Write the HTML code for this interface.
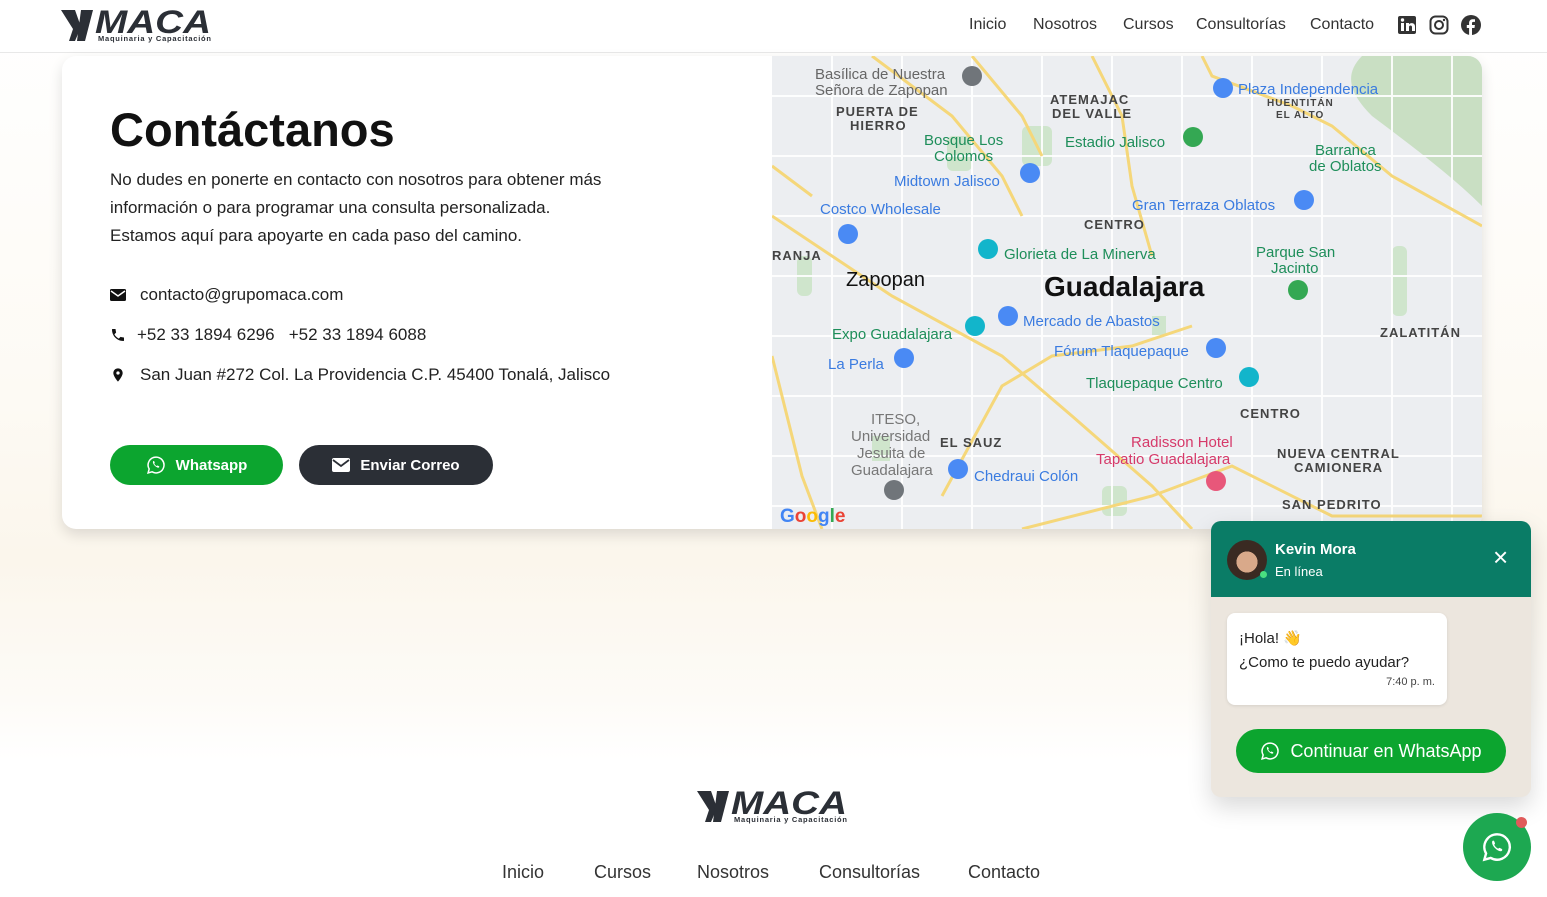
<!DOCTYPE html>
<html><head><meta charset="utf-8"><style>
*{margin:0;padding:0;box-sizing:border-box}
body{width:1547px;height:897px;overflow:hidden;font-family:"Liberation Sans",sans-serif;background:linear-gradient(#fff 0,#fdfaf4 400px,#fbf6ec 560px,#fdfbf7 700px,#fff 760px);position:relative;color:#111}
.hdr{position:absolute;top:0;left:0;width:1547px;height:53px;background:#fff;border-bottom:1px solid #e8e8e8}
.nav{position:absolute;top:16px;font-size:16px;color:#333}
.card{position:absolute;left:62px;top:56px;width:1420px;height:473px;background:#fff;border-radius:14px;box-shadow:0 6px 14px rgba(0,0,0,.12);overflow:hidden}
h1{position:absolute;left:48px;top:46px;font-size:47px;font-weight:bold;color:#111}
.p{position:absolute;left:48px;top:110px;font-size:17px;line-height:28px;color:#222;width:505px}
.ci{position:absolute;left:48px;font-size:17px;color:#222;display:flex;align-items:center;gap:14px}
.btn{position:absolute;top:389px;height:40px;border-radius:20px;color:#fff;font-weight:bold;font-size:15px;display:flex;align-items:center;justify-content:center;gap:10px}
.map{position:absolute;left:710px;top:0;width:710px;height:473px;background:#eef0f3}
.map text{font-family:"Liberation Sans",sans-serif;font-size:15px}
.chat{position:absolute;left:1211px;top:521px;width:320px;height:276px;border-radius:10px;overflow:hidden;background:#ece6de;box-shadow:0 10px 24px rgba(0,0,0,.15)}
.ch{height:76px;background:#0a7c66;position:relative;color:#fff}
.fl{position:absolute;left:1463px;top:813px;width:68px;height:68px;border-radius:50%;background:#1da851}
.fn{position:absolute;top:862px;font-size:18px;color:#333}
</style></head><body>
<div class="hdr">
<svg style="position:absolute;left:61px;top:9px" width="152" height="34" viewBox="0 0 152 34"><polygon points="0,1 14,1 20,18 14,32 8,32 12,20" fill="#2b2f36"/><polygon points="20,1 32,1 24,32 16,32" fill="#2b2f36"/><text x="34" y="24" font-family="Liberation Sans" font-weight="bold" font-style="italic" font-size="32" textLength="116" lengthAdjust="spacingAndGlyphs" fill="#2b2f36">MACA</text><text x="37" y="32" font-family="Liberation Sans" font-weight="bold" font-size="7.5" textLength="113" fill="#2b2f36">Maquinaria y Capacitación</text></svg>
<span class="nav" style="left:969px">Inicio</span><span class="nav" style="left:1033px">Nosotros</span><span class="nav" style="left:1123px">Cursos</span><span class="nav" style="left:1196px">Consultorías</span><span class="nav" style="left:1310px">Contacto</span>
<svg style="position:absolute;left:1397px;top:15px" width="20" height="20"><rect x="1" y="1" width="18" height="18" rx="2" fill="#333"/><rect x="4" y="8" width="3" height="8" fill="#fff"/><circle cx="5.5" cy="5" r="1.7" fill="#fff"/><path d="M9 8h3v1.5c1-2 6-2 6 2V16h-3v-4c0-2-3-2-3 0v4H9z" fill="#fff"/></svg>
<svg style="position:absolute;left:1429px;top:15px" width="20" height="20"><rect x="1.5" y="1.5" width="17" height="17" rx="5" fill="none" stroke="#333" stroke-width="2"/><circle cx="10" cy="10" r="4" fill="none" stroke="#333" stroke-width="2"/><circle cx="15" cy="5" r="1.2" fill="#333"/></svg>
<svg style="position:absolute;left:1461px;top:15px" width="20" height="20"><circle cx="10" cy="10" r="10" fill="#333"/><path d="M11 20v-7h2.5l.4-3H11V8.3c0-.8.3-1.4 1.4-1.4H14V4.3c-.3 0-1.2-.1-2.2-.1-2.2 0-3.7 1.3-3.7 3.8V10H5.8v3h2.3v7z" fill="#fff"/></svg>
</div>
<div class="card">
<h1>Contáctanos</h1>
<div class="p">No dudes en ponerte en contacto con nosotros para obtener más información o para programar una consulta personalizada. Estamos aquí para apoyarte en cada paso del camino.</div>
<div class="ci" style="top:229px"><svg width="16" height="14"><rect x="0" y="1" width="16" height="12" rx="1.5" fill="#111"/><path d="M1 3l7 5 7-5" stroke="#fff" stroke-width="1.5" fill="none"/></svg>contacto@grupomaca.com</div>
<div class="ci" style="top:269px;gap:11px"><svg width="16" height="16" viewBox="0 0 24 24"><path d="M6.6 10.8c1.4 2.8 3.8 5.1 6.6 6.6l2.2-2.2c.3-.3.7-.4 1-.2 1.1.4 2.3.6 3.6.6.6 0 1 .4 1 1V20c0 .6-.4 1-1 1C10.6 21 3 13.4 3 4c0-.6.4-1 1-1h3.5c.6 0 1 .4 1 1 0 1.3.2 2.5.6 3.6.1.3 0 .7-.2 1z" fill="#111"/></svg>+52 33 1894 6296 &nbsp; +52 33 1894 6088</div>
<div class="ci" style="top:309px"><svg width="16" height="16" viewBox="0 0 24 24"><path d="M12 2C8 2 5 5 5 9c0 5 7 13 7 13s7-8 7-13c0-4-3-7-7-7zm0 9.5a2.5 2.5 0 110-5 2.5 2.5 0 010 5z" fill="#111"/></svg>San Juan #272 Col. La Providencia C.P. 45400 Tonalá, Jalisco</div>
<div class="btn" style="left:48px;width:173px;background:#0ca52f"><svg width="20" height="20" viewBox="0 0 24 24"><path d="M12 2.5A9.5 9.5 0 003.8 16.8L2.5 21.5l4.8-1.3A9.5 9.5 0 1012 2.5z" fill="none" stroke="#fff" stroke-width="1.8"/><path d="M8.5 7.5c.5-.5 1.2-.4 1.4.2l.6 1.5c.1.4-.3.8-.6 1.1.6 1.3 1.7 2.4 3 3 .3-.3.7-.8 1.1-.6l1.5.7c.5.2.6.9.2 1.4-1.7 1.8-8.6-3.6-7.2-7.3z" fill="#fff"/></svg>Whatsapp</div>
<div class="btn" style="left:237px;width:194px;background:#2b2f36"><svg width="18" height="14"><rect x="0" y="0" width="18" height="14" rx="2" fill="#fff"/><path d="M1 2l8 6 8-6" stroke="#2b2f36" stroke-width="1.8" fill="none"/></svg>Enviar Correo</div>
<svg class="map" viewBox="0 0 710 473" width="710" height="473">
<rect width="710" height="473" fill="#eceef1"/>
<path d="M590 0 L710 0 L710 150 C680 120 640 90 600 60 C580 40 570 20 590 0Z" fill="#c9dfc3"/>
<g fill="#cfe5cc"><rect x="250" y="70" width="30" height="40" rx="6"/><rect x="175" y="80" width="25" height="35" rx="6"/><rect x="620" y="190" width="15" height="70" rx="6"/><rect x="25" y="200" width="15" height="40" rx="6"/><rect x="380" y="260" width="14" height="20"/><rect x="330" y="430" width="25" height="30" rx="6"/><rect x="100" y="380" width="18" height="25"/></g>
<g stroke="#fff" stroke-width="2" fill="none" opacity=".9">
<path d="M0 40h710M0 100h710M0 160h710M0 220h710M0 280h710M0 340h710M0 400h710M0 450h710"/>
<path d="M60 0v473M130 0v473M200 0v473M270 0v473M340 0v473M410 0v473M480 0v473M550 0v473M620 0v473M680 0v473"/>
</g>
<g stroke="#f5d77a" stroke-width="3" fill="none">
<path d="M0 160 L120 240 L230 300 L300 360 L380 430 L420 473"/>
<path d="M100 0 L180 60 L230 120 L250 160"/>
<path d="M200 0 L250 60 L270 100"/>
<path d="M320 0 L350 60 L360 130 L380 200"/>
<path d="M430 0 L440 20 L520 50 L560 70 L620 120 L710 170"/>
<path d="M0 300 L30 420 L50 473"/>
<path d="M170 440 L230 330 L280 300 L360 290 L420 270"/>
<path d="M250 473 L380 440 L460 410 L560 460 L710 460"/>
<path d="M0 110 L40 140"/>
</g>
<g fill="#666"><text x="43" y="23">Basílica de Nuestra</text><text x="43" y="39">Señora de Zapopan</text></g>
<g fill="#444" font-weight="bold" letter-spacing="1"><text x="64" y="60" style="font-size:13px">PUERTA DE</text><text x="78" y="74" style="font-size:13px">HIERRO</text><text x="278" y="48" style="font-size:13px">ATEMAJAC</text><text x="280" y="62" style="font-size:13px">DEL VALLE</text><text x="312" y="173" style="font-size:13px">CENTRO</text><text x="0" y="204" style="font-size:13px">RANJA</text><text x="608" y="281" style="font-size:13px">ZALATITÁN</text><text x="468" y="362" style="font-size:13px">CENTRO</text><text x="168" y="391" style="font-size:13px">EL SAUZ</text><text x="505" y="402" style="font-size:13px">NUEVA CENTRAL</text><text x="522" y="416" style="font-size:13px">CAMIONERA</text><text x="510" y="453" style="font-size:13px">SAN PEDRITO</text><text x="495" y="50" style="font-size:10px">HUENTITÁN</text><text x="504" y="62" style="font-size:10px">EL ALTO</text></g>
<g fill="#1e8e5a"><text x="152" y="89">Bosque Los</text><text x="162" y="105">Colomos</text><text x="293" y="91">Estadio Jalisco</text><text x="543" y="99">Barranca</text><text x="537" y="115">de Oblatos</text><text x="484" y="201">Parque San</text><text x="499" y="217">Jacinto</text><text x="60" y="283">Expo Guadalajara</text><text x="232" y="203">Glorieta de La Minerva</text><text x="314" y="332">Tlaquepaque Centro</text></g>
<g fill="#3a7be0"><text x="466" y="38">Plaza Independencia</text><text x="122" y="130">Midtown Jalisco</text><text x="48" y="158">Costco Wholesale</text><text x="360" y="154">Gran Terraza Oblatos</text><text x="251" y="270">Mercado de Abastos</text><text x="282" y="300">Fórum Tlaquepaque</text><text x="56" y="313">La Perla</text><text x="202" y="425">Chedraui Colón</text></g>
<g fill="#777"><text x="99" y="368">ITESO,</text><text x="79" y="385">Universidad</text><text x="85" y="402">Jesuita de</text><text x="79" y="419">Guadalajara</text></g>
<g fill="#d63a6a"><text x="359" y="391">Radisson Hotel</text><text x="324" y="408">Tapatio Guadalajara</text></g>
<text x="74" y="230" fill="#111" style="font-size:20px">Zapopan</text>
<text x="272" y="240" fill="#111" font-weight="bold" style="font-size:28px">Guadalajara</text>
<g><circle cx="451" cy="32" r="10" fill="#4a8af4"/><circle cx="421" cy="81" r="10" fill="#34a853"/><circle cx="258" cy="117" r="10" fill="#4a8af4"/><circle cx="76" cy="178" r="10" fill="#4a8af4"/><circle cx="532" cy="144" r="10" fill="#4a8af4"/><circle cx="216" cy="193" r="10" fill="#12b5cb"/><circle cx="526" cy="234" r="10" fill="#34a853"/><circle cx="236" cy="260" r="10" fill="#4a8af4"/><circle cx="203" cy="270" r="10" fill="#12b5cb"/><circle cx="132" cy="302" r="10" fill="#4a8af4"/><circle cx="444" cy="292" r="10" fill="#4a8af4"/><circle cx="477" cy="321" r="10" fill="#12b5cb"/><circle cx="186" cy="413" r="10" fill="#4a8af4"/><circle cx="122" cy="434" r="10" fill="#70757a"/><circle cx="444" cy="425" r="10" fill="#e8577a"/><circle cx="200" cy="20" r="10" fill="#70757a"/></g>
<text x="8" y="466" font-weight="bold" style="font-size:19px" fill="#4285f4">G<tspan fill="#ea4335">o</tspan><tspan fill="#fbbc05">o</tspan><tspan fill="#4285f4">g</tspan><tspan fill="#34a853">l</tspan><tspan fill="#ea4335">e</tspan></text>
</svg>
</div>
<svg style="position:absolute;left:697px;top:789px" width="152" height="36" viewBox="0 0 152 34"><polygon points="0,1 14,1 20,18 14,32 8,32 12,20" fill="#2b2f36"/><polygon points="20,1 32,1 24,32 16,32" fill="#2b2f36"/><text x="34" y="24" font-family="Liberation Sans" font-weight="bold" font-style="italic" font-size="32" textLength="116" lengthAdjust="spacingAndGlyphs" fill="#2b2f36">MACA</text><text x="37" y="32" font-family="Liberation Sans" font-weight="bold" font-size="7.5" textLength="113" fill="#2b2f36">Maquinaria y Capacitación</text></svg>
<span class="fn" style="left:502px">Inicio</span><span class="fn" style="left:594px">Cursos</span><span class="fn" style="left:697px">Nosotros</span><span class="fn" style="left:819px">Consultorías</span><span class="fn" style="left:968px">Contacto</span>
<div class="chat"><div class="ch">
<div style="position:absolute;left:16px;top:19px;width:40px;height:40px;border-radius:50%;background:radial-gradient(circle at 50% 55%,#d9a98a 0 35%,#3a2a22 36%)"></div>
<div style="position:absolute;left:49px;top:50px;width:7px;height:7px;border-radius:50%;background:#4ade80"></div>
<div style="position:absolute;left:64px;top:20px;font-weight:bold;font-size:15px">Kevin Mora</div>
<div style="position:absolute;left:64px;top:43px;font-size:13px">En línea</div>
<div style="position:absolute;left:282px;top:23px;font-size:26px;line-height:26px">×</div></div>
<div style="position:absolute;left:16px;top:92px;width:220px;height:92px;background:#fff;border-radius:8px;box-shadow:0 1px 3px rgba(0,0,0,.1);font-size:15px;color:#222;padding:14px 12px;line-height:24px">¡Hola! 👋<br>¿Como te puedo ayudar?<div style="text-align:right;font-size:11px;line-height:14px;color:#444">7:40 p. m.</div></div>
<div style="position:absolute;left:25px;top:208px;width:270px;height:44px;border-radius:22px;background:#0ca52f;color:#fff;font-size:18px;display:flex;align-items:center;justify-content:center;gap:10px"><svg width="20" height="20" viewBox="0 0 24 24"><path d="M12 2.5A9.5 9.5 0 003.8 16.8L2.5 21.5l4.8-1.3A9.5 9.5 0 1012 2.5z" fill="none" stroke="#fff" stroke-width="1.8"/><path d="M8.5 7.5c.5-.5 1.2-.4 1.4.2l.6 1.5c.1.4-.3.8-.6 1.1.6 1.3 1.7 2.4 3 3 .3-.3.7-.8 1.1-.6l1.5.7c.5.2.6.9.2 1.4-1.7 1.8-8.6-3.6-7.2-7.3z" fill="#fff"/></svg>Continuar en WhatsApp</div>
</div>
<div class="fl"><svg style="position:absolute;left:18px;top:18px" width="32" height="32" viewBox="0 0 24 24"><path d="M12 2.5A9.5 9.5 0 003.8 16.8L2.5 21.5l4.8-1.3A9.5 9.5 0 1012 2.5z" fill="none" stroke="#fff" stroke-width="1.8"/><path d="M8.5 7.5c.5-.5 1.2-.4 1.4.2l.6 1.5c.1.4-.3.8-.6 1.1.6 1.3 1.7 2.4 3 3 .3-.3.7-.8 1.1-.6l1.5.7c.5.2.6.9.2 1.4-1.7 1.8-8.6-3.6-7.2-7.3z" fill="#fff"/></svg></div>
<div style="position:absolute;left:1516px;top:817px;width:11px;height:11px;border-radius:50%;background:#e05a5a"></div>
</body></html>
